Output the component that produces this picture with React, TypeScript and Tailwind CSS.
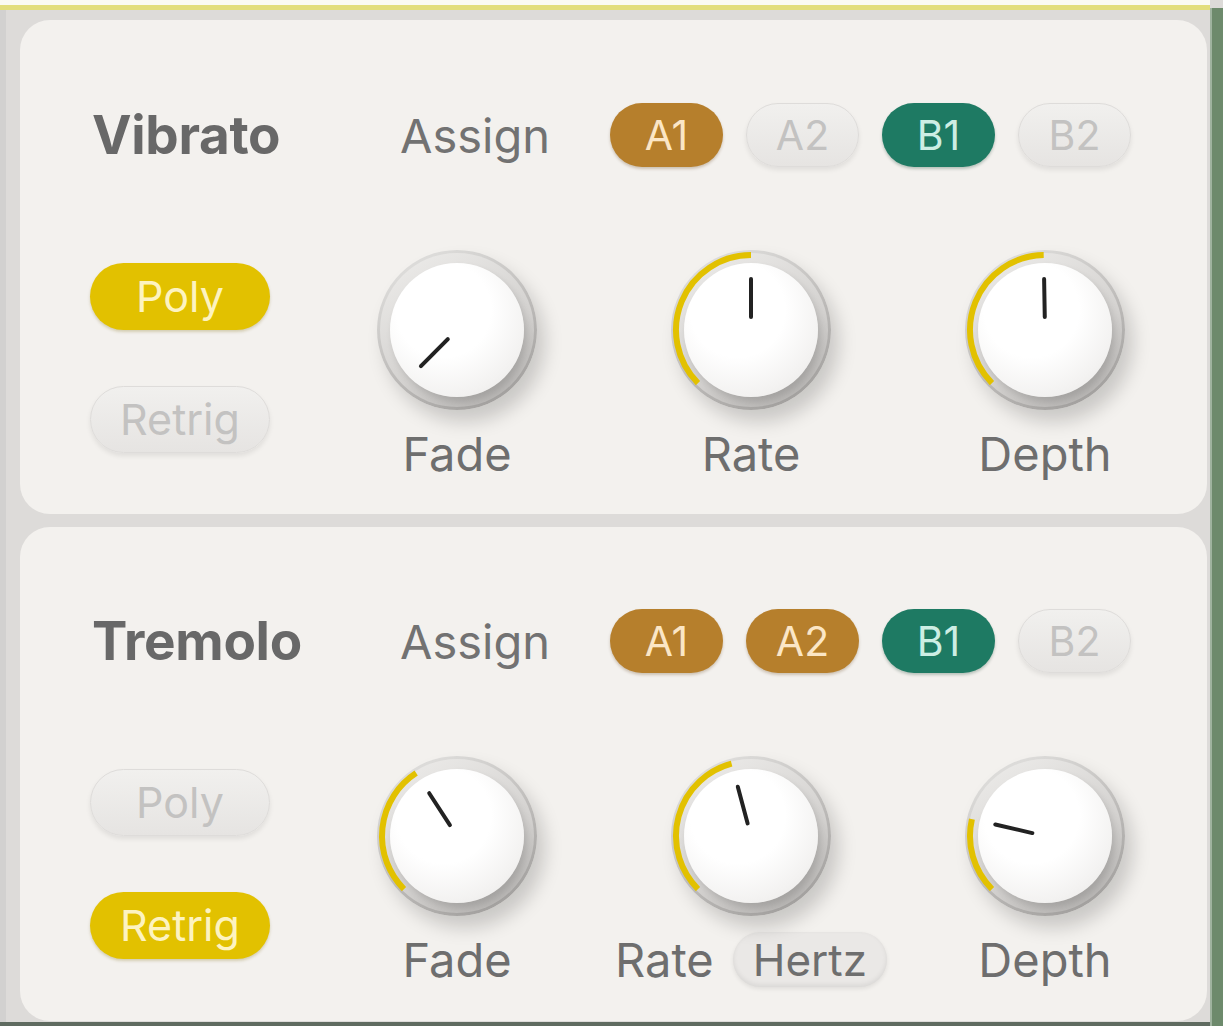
import React from 'react';

const font = { fontFamily: 'Inter, "Noto Sans", sans-serif' };

type PillKind = 'orange' | 'green' | 'yellow' | 'off';

const pillClass: Record<PillKind, string> = {
  orange: 'bg-[#b67f2c] text-[#fbe6c6] shadow-[0_2px_3px_rgba(90,50,0,0.25)]',
  green: 'bg-[#1e7a63] text-[#cdeee4] shadow-[0_2px_3px_rgba(0,50,30,0.25)]',
  yellow: 'bg-[#e2c100] text-[#fdf3c0] shadow-[0_2px_3px_rgba(120,100,0,0.25)]',
  off: 'bg-[linear-gradient(180deg,#f1f0ee,#e6e4e2)] text-[#c3c2c1] border border-[#dedcda] shadow-[0_3px_5px_rgba(0,0,0,0.08)]',
};

const Pill = ({ kind, label, wide }: { kind: PillKind; label: string; wide?: boolean }) => (
  <div
    className={`flex items-center justify-center rounded-full ${
      wide ? 'w-[180px] h-[67px] text-[43px]' : 'w-[113px] h-[64px] text-[41px]'
    } ${pillClass[kind]}`}
  >
    <span className="leading-none">{label}</span>
  </div>
);

const pt = (deg: number, r: number) => {
  const a = (deg * Math.PI) / 180;
  return [80 + r * Math.sin(a), 80 - r * Math.cos(a)];
};

const Knob = ({ value }: { value: number }) => {
  // value = angle in degrees, clockwise from top; -135 is the minimum
  const start = -135;
  const [sx, sy] = pt(start, 75);
  const [ex, ey] = pt(value, 75);
  const large = value - start > 180 ? 1 : 0;
  const [ix, iy] = pt(value, 13);
  const [ox, oy] = pt(value, 51);

  return (
    <div className="relative w-[160px] h-[160px] rounded-full bg-[linear-gradient(150deg,#dcdbd9_15%,#bdbbb9_55%,#9a9896)] shadow-[8px_12px_18px_rgba(0,0,0,0.17)]">
      <div className="absolute inset-[3px] rounded-full bg-[linear-gradient(150deg,#efeeec,#d3d1cf_60%,#aeacaa)]" />
      <div className="absolute inset-[13px] rounded-full bg-[radial-gradient(circle_at_40%_35%,#ffffff_40%,#f3f2f1_72%,#e4e3e1)] shadow-[3px_5px_7px_rgba(0,0,0,0.14)]" />
      <svg className="absolute inset-0" width="160" height="160" viewBox="0 0 160 160">
        {value > start && (
          <path
            d={`M ${sx} ${sy} A 75 75 0 ${large} 1 ${ex} ${ey}`}
            fill="none"
            stroke="#e2c100"
            strokeWidth="6"
          />
        )}
        <line x1={ix} y1={iy} x2={ox} y2={oy} stroke="#222" strokeWidth="4" strokeLinecap="round" />
      </svg>
    </div>
  );
};

const KnobCol = ({ value, children }: { value: number; children: React.ReactNode }) => (
  <div className="w-[240px] flex flex-col items-center">
    <Knob value={value} />
    <div className="mt-[20px] h-[47px] flex items-center gap-[19px] text-[47px] leading-none text-[#6e6e6e]">
      {children}
    </div>
  </div>
);

type Section = {
  title: string;
  assign: PillKind[];
  poly: boolean;
  retrig: boolean;
  knobs: number[];
  hertz?: boolean;
};

const Panel = ({ s, pt: padTop }: { s: Section; pt: string }) => (
  <div className={`bg-[#f3f1ee] rounded-[30px] h-[494px] pl-[72px] ${padTop}`}>
    <div className="flex items-center h-[64px]">
      <div className="w-[308px] text-[53px] font-bold leading-none text-[#686868] tracking-[-0.3px]">{s.title}</div>
      <div className="w-[210px] text-[47px] leading-none text-[#727272]">Assign</div>
      <div className="flex gap-[23px]">
        {['A1', 'A2', 'B1', 'B2'].map((l, i) => (
          <Pill key={l} kind={s.assign[i]} label={l} />
        ))}
      </div>
    </div>
    <div className="flex mt-[83px] -ml-[2px]">
      <div className="w-[180px] pt-[13px] flex flex-col gap-[56px]">
        <Pill wide kind={s.poly ? 'yellow' : 'off'} label="Poly" />
        <Pill wide kind={s.retrig ? 'yellow' : 'off'} label="Retrig" />
      </div>
      <div className="flex ml-[67px] gap-[54px]">
        <KnobCol value={s.knobs[0]}>Fade</KnobCol>
        <KnobCol value={s.knobs[1]}>
          <span>Rate</span>
          {s.hertz && (
            <span className="h-[55px] px-[20px] flex items-center rounded-full text-[44px] bg-[#eae8e6] shadow-[inset_0_-2px_5px_rgba(0,0,0,0.08),0_2px_4px_rgba(0,0,0,0.08)] text-[#6e6e6e]">
              Hertz
            </span>
          )}
        </KnobCol>
        <KnobCol value={s.knobs[2]}>Depth</KnobCol>
      </div>
    </div>
  </div>
);

export default function App() {
  const vibrato: Section = {
    title: 'Vibrato',
    assign: ['orange', 'off', 'green', 'off'],
    poly: true,
    retrig: false,
    knobs: [-135, 0, -1],
  };
  const tremolo: Section = {
    title: 'Tremolo',
    assign: ['orange', 'orange', 'green', 'off'],
    poly: false,
    retrig: true,
    knobs: [-33, -15, -77],
    hertz: true,
  };

  return (
    <div style={font} className="w-[1223px] h-[1026px] flex bg-[#dcdad8] overflow-hidden">
      <div className="w-[1210px] flex flex-col">
        <div className="h-[5px] bg-[#fbfaf2]" />
        <div className="h-[5px] bg-[#e3de7c]" />
        <div className="h-[1012px] pl-[20px] pr-[3px] pt-[10px] flex flex-col gap-[13px] bg-[linear-gradient(90deg,#d2d1d0_6px,#dddbd9_6px)]">
          <Panel s={vibrato} pt="pt-[83px]" />
          <Panel s={tremolo} pt="pt-[82px]" />
        </div>
        <div className="h-[4px] bg-[#5f6b60]" />
      </div>
      <div className="w-[13px] mt-[8px] bg-[#6d8a6c] border-l-[2px] border-[#9fb39f]" />
    </div>
  );
}
